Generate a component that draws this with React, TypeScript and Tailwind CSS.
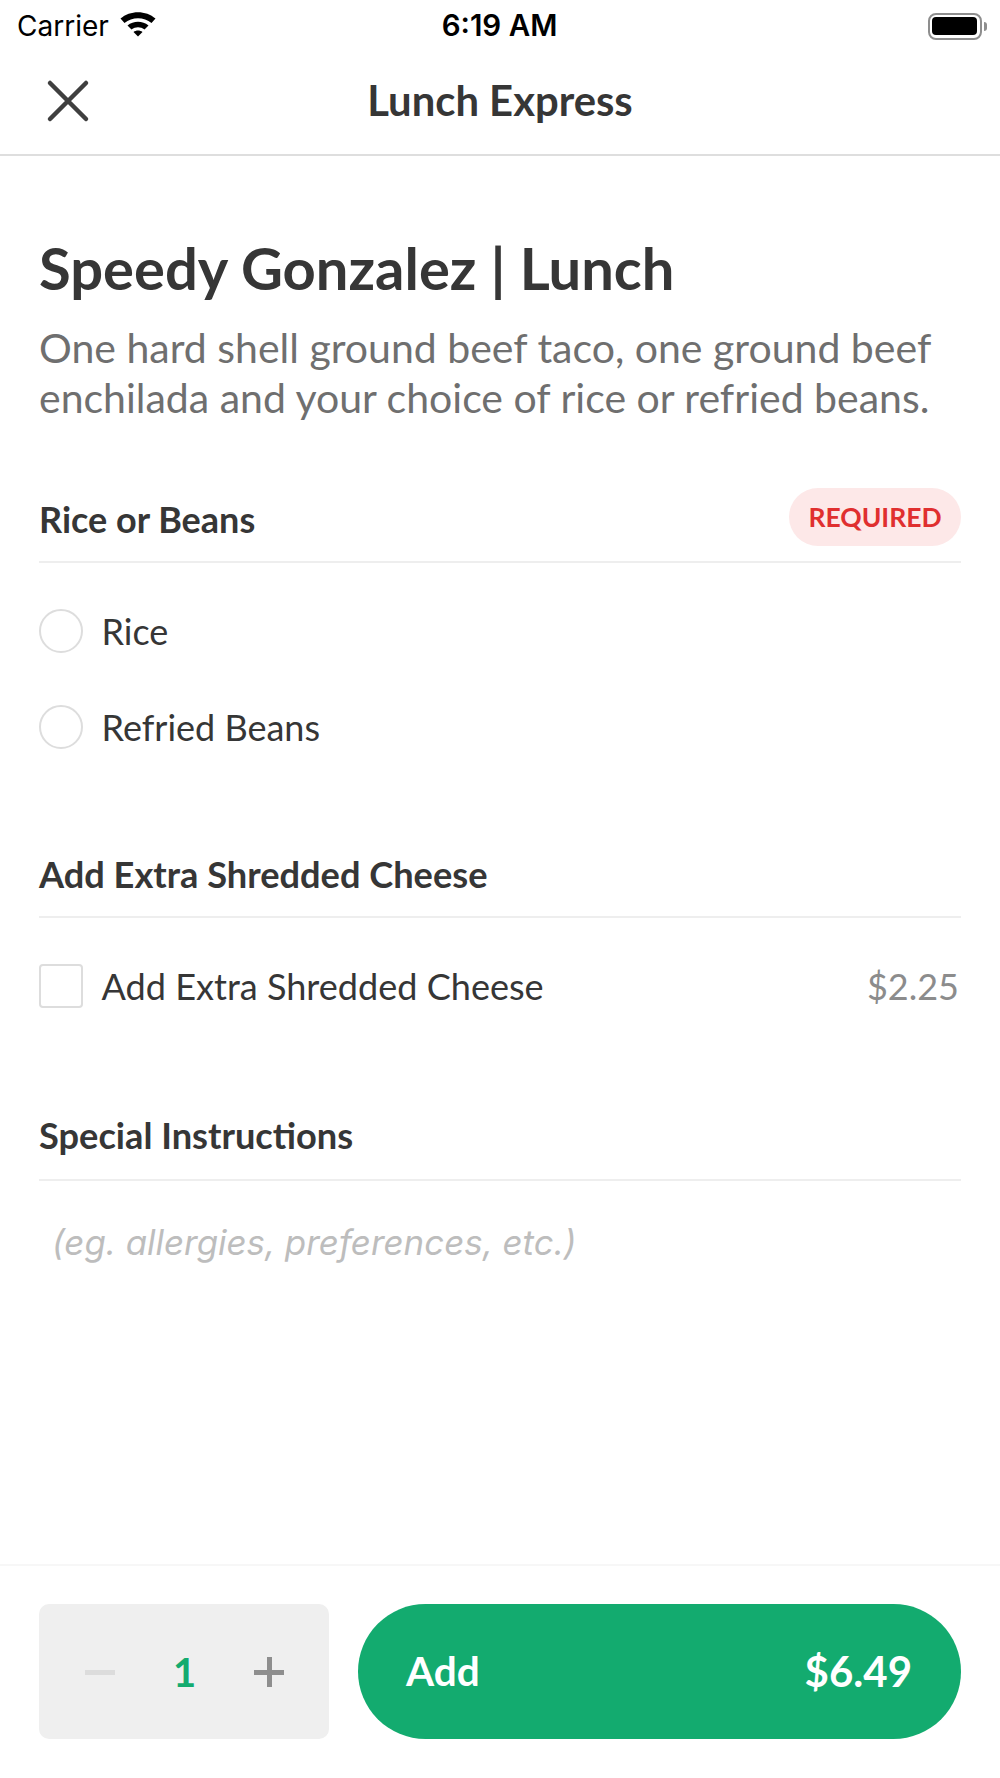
export default function App() {
  const lato = "font-['Lato','Noto_Sans',sans-serif]";
  return (
    <div className={`flex h-[1778px] w-[1000px] flex-col bg-white ${lato} text-[#363636]`}>
      {/* status bar */}
      <div className="flex h-[50px] items-center justify-between pl-[17px] pr-[13px] pt-[2px] text-black font-['Inter',sans-serif]">
        <div className="flex w-[295px] items-center gap-[10px]">
          <span className="text-[28px] leading-none">Carrier</span>
          <svg width="38" height="28" viewBox="0 0 38 28" className="mt-[-6px]">
            <path d="M1.5 9.5 C11 1 27 1 36.5 9.5 L32.5 14 C25 7.5 13 7.5 5.5 14 Z" fill="#000" />
            <path d="M8.5 16.5 C14.5 11.5 23.5 11.5 29.5 16.5 L25.5 20.5 C21.5 17.5 16.5 17.5 12.5 20.5 Z" fill="#000" />
            <path d="M14.5 23 C17 21 21 21 23.5 23 L19 27.5 Z" fill="#000" />
          </svg>
        </div>
        <span className="text-[29.5px] font-semibold leading-none">6:19 AM</span>
        <div className="flex w-[300px] items-center justify-end">
          <div className="flex h-[27px] w-[54px] items-center justify-center rounded-[8px] border-[2.5px] border-[#8e8e8e]">
            <div className="h-[18px] w-[45px] rounded-[4px] bg-black" />
          </div>
          <div className="ml-[2px] h-[9px] w-[3px] rounded-r-[3px] bg-[#8e8e8e]" />
        </div>
      </div>

      {/* nav */}
      <div className="relative flex h-[106px] items-center justify-center border-b-2 border-[#dedede] pb-[2px]">
        <svg width="44" height="44" viewBox="0 0 44 44" className="absolute left-[46px] top-[29px]">
          <path d="M4 4 L40 40 M40 4 L4 40" stroke="#3f3f3f" strokeWidth="4.5" strokeLinecap="round" />
        </svg>
        <span className="text-[41.8px] font-bold leading-none">Lunch Express</span>
      </div>

      {/* content */}
      <div className="flex-1 px-[39px]">
        <h1 className="mt-[75px] text-[57.9px] font-bold leading-[74px]">Speedy Gonzalez | Lunch</h1>
        <p className="mt-[18px] text-[41px] leading-[49.5px] text-[#6f6f6f]">
          One hard shell ground beef taco, one ground beef enchilada and your choice of rice or refried beans.
        </p>

        <div className="mt-[66px] flex h-[75px] items-center justify-between border-b-2 border-[#eeeeee] pb-[15px]">
          <span className="mt-[4px] text-[36px] font-bold leading-none">Rice or Beans</span>
          <span className="flex h-[58px] w-[172px] items-center justify-center rounded-full bg-[#fde8e8] pt-[1px] text-[26.5px] font-bold text-[#e02f2f]">
            REQUIRED
          </span>
        </div>

        <div className="mt-[46px] flex flex-col gap-[52px]">
          <div className="flex h-[44px] items-center gap-[18.5px]">
            <div className="h-[44px] w-[44px] rounded-full border-2 border-[#dddddd]" />
            <span className="text-[36px] leading-none">Rice</span>
          </div>
          <div className="flex h-[44px] items-center gap-[18.5px]">
            <div className="h-[44px] w-[44px] rounded-full border-2 border-[#dddddd]" />
            <span className="text-[36px] leading-none">Refried Beans</span>
          </div>
        </div>

        <div className="mt-[107px] flex h-[62px] items-start border-b-2 border-[#eeeeee]">
          <span className="text-[36.2px] font-bold leading-none">Add Extra Shredded Cheese</span>
        </div>

        <div className="mt-[46px] flex h-[44px] items-center">
          <div className="h-[44px] w-[44px] rounded-[4px] border-2 border-[#dddddd]" />
          <span className="ml-[18.5px] flex-1 text-[36.1px] leading-none">Add Extra Shredded Cheese</span>
          <span className="mr-[2px] text-[36px] leading-none text-[#8c8c8c]">$2.25</span>
        </div>

        <div className="mt-[109px] flex h-[64px] items-start border-b-2 border-[#eeeeee]">
          <span className="text-[36.2px] font-bold leading-none">Special Instructions</span>
        </div>

        <div className="mt-[44px] pl-[13px] font-['Inter',sans-serif] text-[34.9px] italic leading-none text-[#bdbdbd]">
          (eg. allergies, preferences, etc.)
        </div>
      </div>

      {/* bottom bar */}
      <div className="flex h-[214px] gap-[29px] border-t-2 border-[#f7f7f7] px-[39px] pt-[38px]">
        <div className="flex h-[135px] w-[290px] items-center rounded-[10px] bg-[#efefef] pl-[46px] pr-[45px]">
          <svg width="30" height="30" viewBox="0 0 30 30"><rect x="0" y="13" width="30" height="5" fill="#dcdcdc" /></svg>
          <span className="flex-1 text-center text-[40px] font-bold leading-none text-[#13ab6f]">1</span>
          <svg width="30" height="30" viewBox="0 0 30 30"><rect x="0" y="13" width="30" height="5" fill="#8e8e8e" /><rect x="13" y="0" width="5" height="30" fill="#8e8e8e" /></svg>
        </div>
        <div className="flex h-[135px] flex-1 items-center justify-between rounded-full bg-[#13ab6f] pl-[48px] pr-[49px] text-[40.5px] font-bold text-white">
          <span>Add</span>
          <span className="text-[42px]">$6.49</span>
        </div>
      </div>
    </div>
  );
}
